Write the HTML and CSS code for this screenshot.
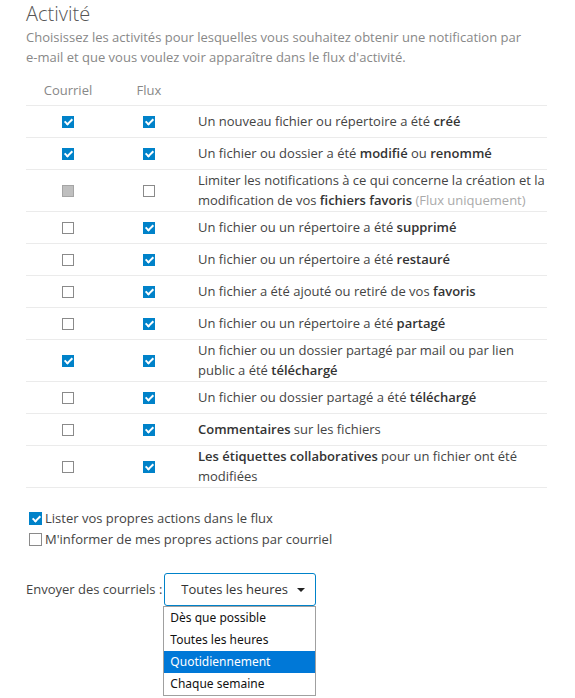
FILE: index.html
```html
<!DOCTYPE html>
<html lang="fr">
<head>
    <meta charset="UTF-8">
    <title>Activité</title>
    <link rel="stylesheet" href="styles.css">
</head>
<body>
    <div class="section">
        <h2>Activité</h2>
        <p class="desc">Choisissez les activités pour lesquelles vous souhaitez obtenir une notification par <span class="nowrap">e-mail</span> et que vous voulez voir apparaître dans le flux d'activité.</p>

        <div class="grid">
            <div class="row head">
                <div class="col">Courriel</div>
                <div class="col">Flux</div>
                <div></div>
            </div>
            <div class="row">
                <div class="col"><span class="cb on"></span></div>
                <div class="col"><span class="cb on"></span></div>
                <div class="label">Un nouveau fichier ou répertoire a été <b>créé</b></div>
            </div>
            <div class="row">
                <div class="col"><span class="cb on"></span></div>
                <div class="col"><span class="cb on"></span></div>
                <div class="label">Un fichier ou dossier a été <b>modifié</b> ou <b>renommé</b></div>
            </div>
            <div class="row">
                <div class="col"><span class="cb disabled"></span></div>
                <div class="col"><span class="cb"></span></div>
                <div class="label">Limiter les notifications à ce qui concerne la création et la modification de vos <b>fichiers favoris</b> <span class="hint">(Flux uniquement)</span></div>
            </div>
            <div class="row">
                <div class="col"><span class="cb"></span></div>
                <div class="col"><span class="cb on"></span></div>
                <div class="label">Un fichier ou un répertoire a été <b>supprimé</b></div>
            </div>
            <div class="row">
                <div class="col"><span class="cb"></span></div>
                <div class="col"><span class="cb on"></span></div>
                <div class="label">Un fichier ou un répertoire a été <b>restauré</b></div>
            </div>
            <div class="row">
                <div class="col"><span class="cb"></span></div>
                <div class="col"><span class="cb on"></span></div>
                <div class="label">Un fichier a été ajouté ou retiré de vos <b>favoris</b></div>
            </div>
            <div class="row">
                <div class="col"><span class="cb"></span></div>
                <div class="col"><span class="cb on"></span></div>
                <div class="label">Un fichier ou un répertoire a été <b>partagé</b></div>
            </div>
            <div class="row">
                <div class="col"><span class="cb on"></span></div>
                <div class="col"><span class="cb on"></span></div>
                <div class="label">Un fichier ou un dossier partagé par mail ou par lien public a été <b>téléchargé</b></div>
            </div>
            <div class="row">
                <div class="col"><span class="cb"></span></div>
                <div class="col"><span class="cb on"></span></div>
                <div class="label">Un fichier ou dossier partagé a été <b>téléchargé</b></div>
            </div>
            <div class="row">
                <div class="col"><span class="cb"></span></div>
                <div class="col"><span class="cb on"></span></div>
                <div class="label"><b>Commentaires</b> sur les fichiers</div>
            </div>
            <div class="row">
                <div class="col"><span class="cb"></span></div>
                <div class="col"><span class="cb on"></span></div>
                <div class="label"><b>Les étiquettes collaboratives</b> pour un fichier ont été modifiées</div>
            </div>
        </div>

        <div class="options">
            <label class="opt"><span class="cb big on"></span>Lister vos propres actions dans le flux</label>
            <label class="opt"><span class="cb big"></span>M'informer de mes propres actions par courriel</label>
        </div>

        <div class="send">
            <span class="send-label">Envoyer des courriels :</span>
            <div class="select-wrap">
                <div class="select">Toutes les heures<span class="caret"></span></div>
                <ul class="dropdown">
                    <li>Dès que possible</li>
                    <li>Toutes les heures</li>
                    <li class="active">Quotidiennement</li>
                    <li>Chaque semaine</li>
                </ul>
            </div>
        </div>
    </div>
</body>
</html>
```

FILE: styles.css
```css
body {
    margin: 0;
    background-color: #ffffff;
    color: #555555;
    font-family: "Open Sans", "Liberation Sans", sans-serif;
    font-size: 13px;
}

.section {
    padding: 0 28px 0 26px;
}

h2 {
    margin: 0;
    padding-top: 1px;
    font-size: 20px;
    font-weight: 300;
    line-height: 26px;
    color: #555555;
}

.desc {
    margin: 0;
    line-height: 20px;
    color: #888888;
}

.nowrap {
    white-space: nowrap;
}

.grid {
    margin-top: 14px;
}

.row {
    display: grid;
    grid-template-columns: 84px 78px 1fr;
    align-items: center;
    min-height: 31px;
    border-bottom: 1px solid #ebebeb;
}

.row.head {
    min-height: 24px;
    color: #888888;
    align-items: start;
}

.col {
    display: flex;
    justify-content: center;
}

.label {
    padding: 0 0 1px 10px;
    line-height: 20px;
    color: #444444;
}

.label b {
    font-weight: 600;
    color: #333333;
}

.hint {
    color: #aaaaaa;
}

.cb {
    display: inline-block;
    position: relative;
    box-sizing: border-box;
    width: 12px;
    height: 12px;
    border: 1px solid #8a8a8a;
    background-color: #ffffff;
    margin-top: 1px;
}

.cb.big {
    width: 13px;
    height: 13px;
    margin: 0 3px 0 0;
}

.cb.on {
    background-color: #0082c9;
    border-color: #0082c9;
}

.cb.on::after {
    content: "";
    position: absolute;
    left: 3px;
    top: 0px;
    width: 3px;
    height: 6px;
    border: solid #ffffff;
    border-width: 0 2px 2px 0;
    transform: rotate(45deg);
}

.cb.big.on::after {
    left: 3.5px;
    top: 0.5px;
}

.cb.disabled {
    background-color: #bfbfbf;
    border-color: #a5a5a5;
}

.options {
    margin-top: 20px;
    padding-left: 3px;
}

.opt {
    display: flex;
    align-items: center;
    line-height: 21px;
    color: #444444;
}

.send {
    display: flex;
    align-items: flex-start;
    gap: 2px;
    margin-top: 23px;
    color: #444444;
}

.send-label {
    line-height: 33px;
}

.select-wrap {
    display: flex;
    flex-direction: column;
}

.select {
    box-sizing: border-box;
    width: 152px;
    height: 33px;
    border: 1px solid #0082c9;
    border-radius: 3px;
    padding: 0 0 0 16px;
    line-height: 31px;
    color: #333333;
    position: relative;
}

.caret {
    position: absolute;
    right: 10px;
    top: 14px;
    border-left: 4px solid transparent;
    border-right: 4px solid transparent;
    border-top: 4px solid #222222;
}

.dropdown {
    box-sizing: border-box;
    width: 153px;
    margin: 0 0 0 -1px;
    padding: 0;
    list-style: none;
    border: 1px solid #a0a0a0;
    background-color: #ffffff;
    font-family: "Noto Sans", "Open Sans", sans-serif;
    font-size: 12px;
    color: #111111;
}

.dropdown li {
    height: 22px;
    line-height: 22px;
    padding-left: 6px;
}

.dropdown li.active {
    background-color: #0078d7;
    color: #ffffff;
}
```
